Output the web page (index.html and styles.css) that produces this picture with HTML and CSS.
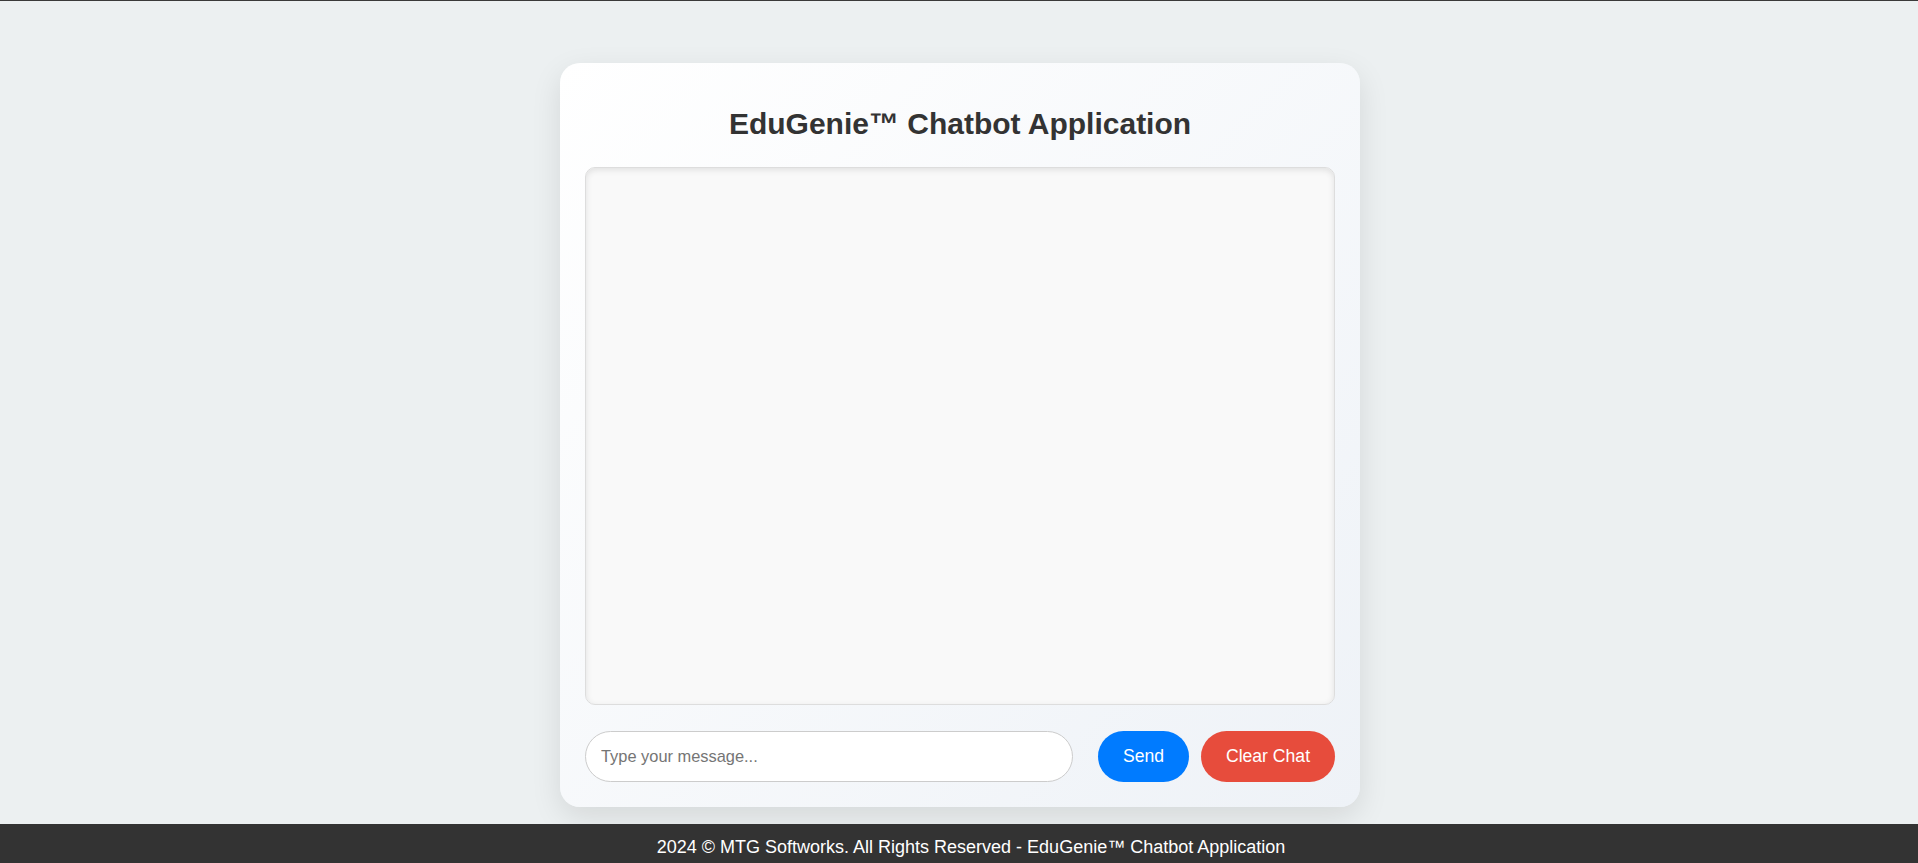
FILE: index.html
```html
<!DOCTYPE html>
<html lang="en">
<head>
<meta charset="utf-8">
<title>EduGenie™ Chatbot Application</title>
<link rel="stylesheet" href="styles.css">
</head>
<body>
<main class="page">
  <section class="card">
    <h1 class="title">EduGenie™ Chatbot Application</h1>
    <div class="chat-box"></div>
    <div class="input-row">
      <input class="msg-input" type="text" placeholder="Type your message...">
      <button class="btn btn-send">Send</button>
      <button class="btn btn-clear">Clear Chat</button>
    </div>
  </section>
</main>
<footer class="footer">2024 © MTG Softworks. All Rights Reserved - EduGenie™ Chatbot Application</footer>
</body>
</html>
```

FILE: styles.css
```css
* { box-sizing: border-box; }

html, body {
  margin: 0;
  padding: 0;
  height: 100%;
  overflow: hidden;
}

body {
  background: #ecf0f1;
  font-family: "Liberation Sans", Arial, sans-serif;
  color: #333;
  border-top: 1px solid #3a3a3a;
  display: flex;
  flex-direction: column;
}

.page {
  flex: 1;
  display: flex;
  justify-content: center;
  align-items: flex-start;
  padding: 62px 0 0 2px;
}

.card {
  width: 800px;
  padding: 25px;
  border-radius: 20px;
  background: linear-gradient(135deg, #ffffff 0%, #eef2f7 100%);
  box-shadow: 0 10px 30px rgba(0, 0, 0, 0.1);
}

.title {
  margin: 19px 0 25px;
  font-size: 30px;
  line-height: 34.5px;
  font-weight: bold;
  text-align: center;
  color: #333;
}

.chat-box {
  height: 538px;
  border: 1px solid #ddd;
  border-radius: 10px;
  background: #f9f9f9;
  box-shadow: inset 0 2px 6px rgba(0, 0, 0, 0.1);
}

.input-row {
  display: flex;
  align-items: center;
  margin-top: 26px;
}

.msg-input {
  flex: 1;
  height: 51px;
  margin-right: 25px;
  padding: 0 15px;
  border: 1px solid #ccc;
  border-radius: 26px;
  background: #fff;
  font-family: "Liberation Sans", Arial, sans-serif;
  font-size: 16.4px;
  color: #333;
  outline: none;
}

.msg-input::placeholder {
  color: #757575;
}

.btn {
  height: 51px;
  border: none;
  border-radius: 26px;
  color: #fff;
  font-family: "Liberation Sans", Arial, sans-serif;
  font-size: 17.6px;
  padding: 0;
  cursor: pointer;
}

.btn-send {
  width: 91px;
  background: #007bff;
  margin-right: 12px;
}

.btn-clear {
  width: 134px;
  background: #e74c3c;
}

.footer {
  height: 39px;
  padding: 13px 0 0 24px;
  background: #333;
  color: #fff;
  font-size: 18px;
  line-height: 21px;
  text-align: center;
  white-space: nowrap;
}
```
